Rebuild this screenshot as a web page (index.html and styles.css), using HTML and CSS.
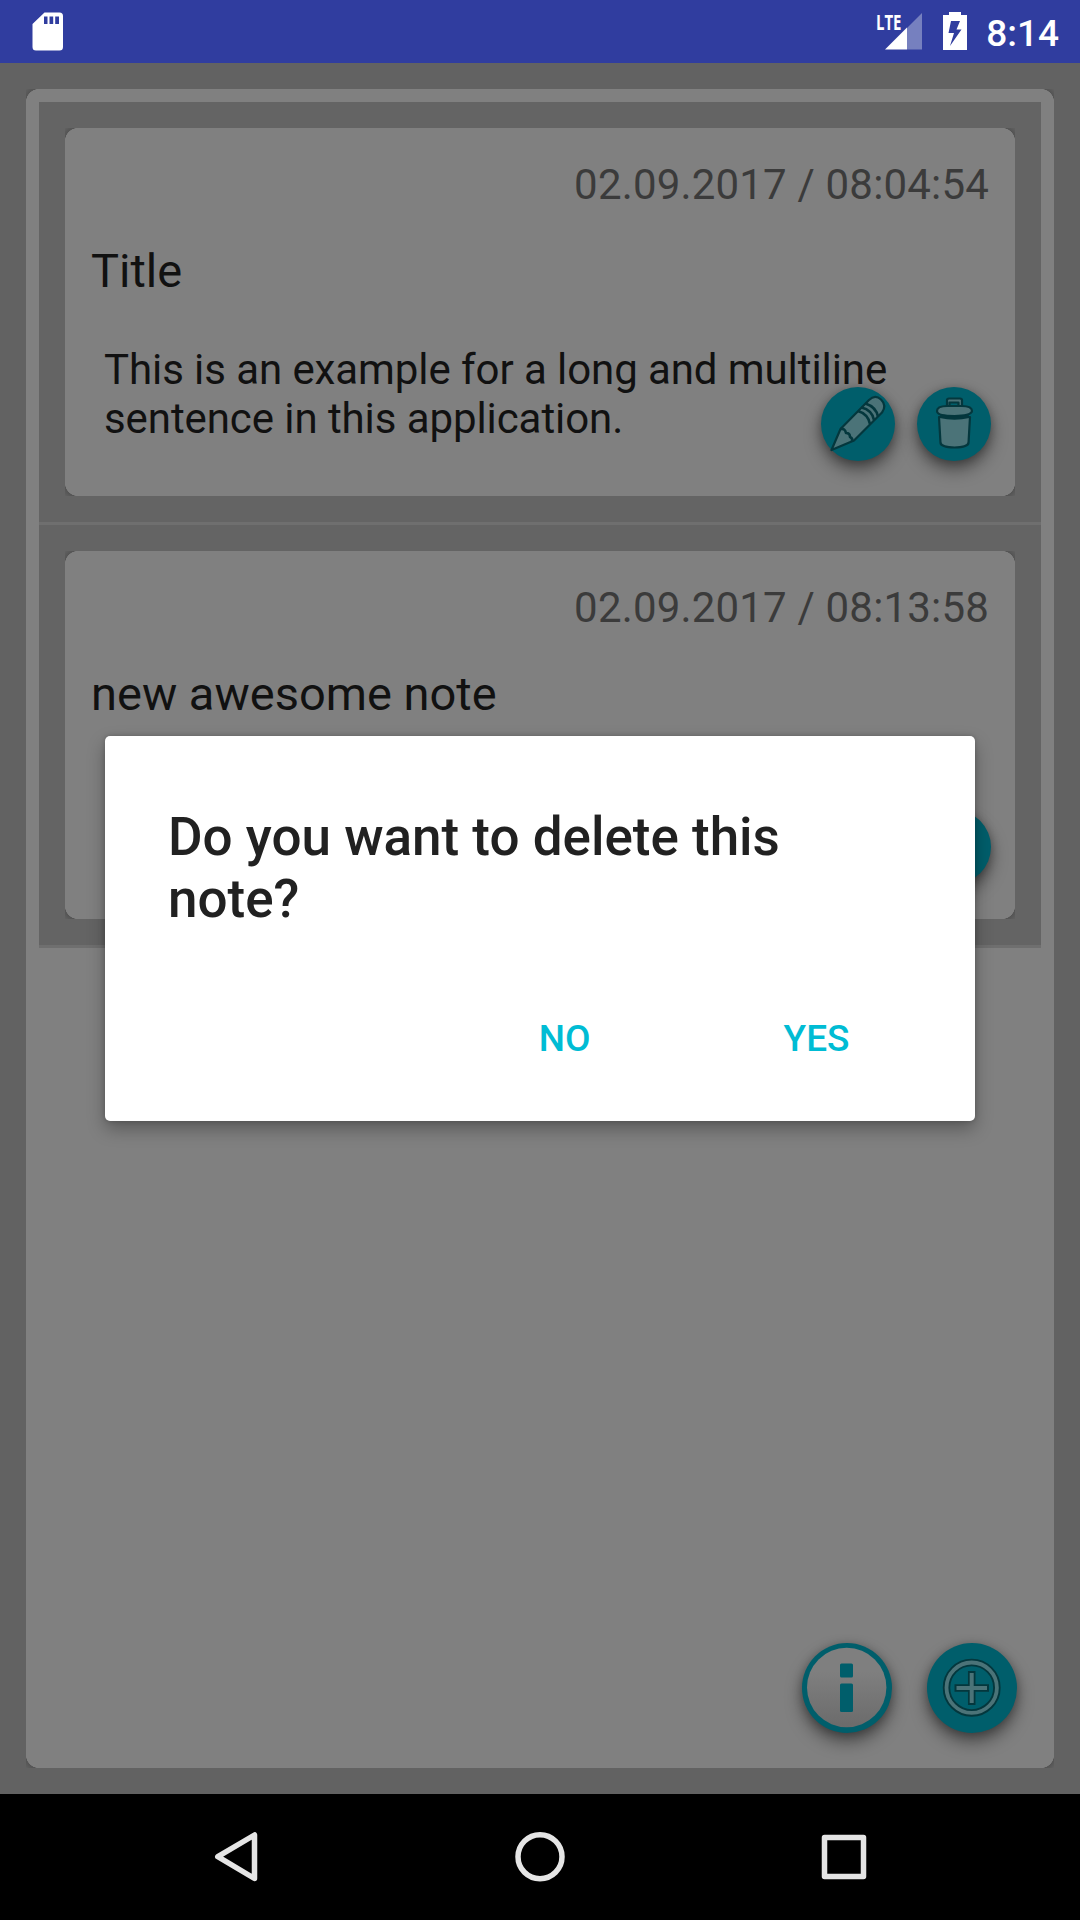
FILE: index.html
```html
<!DOCTYPE html>
<html lang="en">
<head>
<meta charset="utf-8">
<title>Notes</title>
<link rel="stylesheet" href="styles.css">
</head>
<body>
<div class="screen">
  <header class="status-bar">
    <svg class="sd-icon" width="32" height="40" viewBox="0 0 32 40"><path fill="#fff" fill-rule="evenodd" d="M12.500 .5H27.500Q31 .5 31 4V35Q31 38.500 27.500 38.500H4Q.5 38.500 .5 35V12ZM12 4.500V12H15.500V4.500ZM17.500 4.500V12H21.200V4.500ZM23.200 4.500V12H27V4.500Z"/></svg>
    <div class="status-right">
      <div class="signal">
        <svg width="38" height="38" viewBox="0 0 38 38"><path fill="#7680bf" d="M37 0V36.500H22V15Z"/><path fill="#fff" d="M22 14.500V36.500H0Z"/></svg>
        <span class="lte">LTE</span>
      </div>
      <svg class="battery" width="24" height="38" viewBox="0 0 24 38"><path fill="#fff" fill-rule="evenodd" d="M6 0H18V3H24V38H0V3H6ZM8 9L5.500 21H11L7 34L18.500 17.500H13.500L17 9Z"/></svg>
      <span class="clock">8:14</span>
    </div>
  </header>

  <main class="app">
    <section class="panel">
      <ul class="notes">
        <li class="row">
          <article class="card">
            <time class="date">02.09.2017 / 08:04:54</time>
            <h2 class="title">Title</h2>
            <p class="text">This is an example for a long and multiline sentence in this application.</p>
            <div class="actions">
              <button class="fab small" aria-label="Edit"><svg width="74" height="74" viewBox="0 0 74 74"><g fill="#4b7378" stroke="#04373d" stroke-width="2.200" stroke-linejoin="round"><path d="M10.500 63L19.500 42L48 13Q54 7 60 12.500Q66 18.500 61 25.500L33 53.500Z"/><path fill="none" stroke-width="2.600" d="M19.500 42Q24 41 25 46Q29 46 29 50Q32 51 31 54.500M37 24Q47 27 49 37M40.500 20.500Q51 23 53 33M44.500 16.500Q55 20 57 29.500"/></g></svg></button>
              <button class="fab small" aria-label="Delete"><svg width="74" height="74" viewBox="0 0 74 74"><g fill="#4b7378" stroke="#04373d" stroke-width="2.200" stroke-linejoin="round"><path d="M22 30H53L51.500 56Q51 60 37.500 60.500Q24 60 23.500 56Z"/><path d="M30 21V13Q30 11.500 32 11.500H43Q45 11.500 45 13V21Z"/><path fill="#005e6b" d="M32.500 15.500H41.500V20H32.500Z"/><path d="M20 24Q20 19 30 19H45Q55 19 55 24Q54 29 37.500 29Q20 29 20 24Z"/><path fill="none" stroke-width="3" d="M23 29.500Q37.500 33 52 29.500"/></g></svg></button>
            </div>
          </article>
        </li>
        <li class="row">
          <article class="card">
            <time class="date">02.09.2017 / 08:13:58</time>
            <h2 class="title">new awesome note</h2>
            <div class="actions">
              <button class="fab small" aria-label="Edit"></button>
              <button class="fab small" aria-label="Delete"></button>
            </div>
          </article>
        </li>
      </ul>
      <div class="tools">
        <button class="fab" aria-label="Info"><svg width="90" height="90" viewBox="0 0 90 90"><defs><linearGradient id="g" x2="0" y2="1"><stop offset=".3" stop-color="#7f7f7f"/><stop offset="1" stop-color="#6b6b6b"/></linearGradient></defs><circle cx="44.700" cy="44.500" r="39.700" fill="url(#g)"/><g fill="#005e6b"><rect x="38" y="20.500" width="13" height="14" rx="1.500"/><rect x="38" y="40.500" width="13" height="28.500" rx="1.500"/></g></svg></button>
        <button class="fab" aria-label="Add"><svg width="90" height="90" viewBox="0 0 90 90"><g fill="none" stroke="#04373d"><circle cx="44.700" cy="44.700" r="25.200" stroke-width="7.500"/><path d="M44.700 28V62M27.500 45H62" stroke-width="7.500"/></g><g fill="none" stroke="#4b7378"><circle cx="44.700" cy="44.700" r="25.200" stroke-width="3.800"/><path d="M44.700 30V60M29.500 45H60" stroke-width="4"/></g></svg></button>
      </div>
    </section>
  </main>

  <nav class="nav-bar">
    <svg width="1080" height="126" viewBox="0 0 1080 126"><g fill="none" stroke="#e5e5e5" stroke-width="5.500" stroke-linejoin="round"><path d="M254.500 41V84.500L217.800 62.700Z"/><circle cx="540" cy="62.700" r="22"/><rect x="824.500" y="43.500" width="39" height="39"/></g></svg>
  </nav>

  <div class="dialog" role="dialog">
    <h1 class="question">Do you want to delete this note?</h1>
    <div class="choices">
      <button class="choice">NO</button>
      <button class="choice">YES</button>
    </div>
  </div>
</div>
</body>
</html>
```
FILE: styles.css
```css
* { box-sizing: border-box; margin: 0; padding: 0; }
body { font-family: Roboto, sans-serif; background: #000; }
button { border: 0; background: none; font: inherit; }
svg { display: block; }

.screen { position: relative; display: flex; flex-direction: column; width: 1080px; height: 1920px; overflow: hidden; }

.status-bar { flex: none; display: flex; justify-content: space-between; height: 63px; padding: 12px 21px 0 32px; background: #303d9f; color: #fff; }
.status-right { display: flex; }
.signal { position: relative; margin: 1px 20px 0 0; }
.lte { position: absolute; left: -9px; top: -2px; font: 700 22px/20px "Open Sans", sans-serif; transform: scaleX(.68); transform-origin: 0 0; }
.battery { margin-right: 19px; }
.clock { font-weight: 500; font-size: 37px; line-height: 43px; }

.app { flex: 1; padding: 26px; background: #626262; }
.panel { display: flex; flex-direction: column; justify-content: space-between; height: 1679px; padding: 13px; }
.app, .panel, .card { min-height: 0; }

/* rounded face with a faint shadow left in the square corners */
.panel, .card {
  --stops: #808080 12.700px, #545454 13.300px, #626262 18.500px;
  background:
    radial-gradient(circle at 100% 100%, var(--stops)) 0 0 / 13px 13px no-repeat,
    radial-gradient(circle at 0 100%, var(--stops)) 100% 0 / 13px 13px no-repeat,
    radial-gradient(circle at 100% 0, var(--stops)) 0 100% / 13px 13px no-repeat,
    radial-gradient(circle at 0 0, var(--stops)) 100% 100% / 13px 13px no-repeat,
    #808080;
}

.notes { list-style: none; }
.row { height: 423px; padding: 26px; background: #646464; border-bottom: 3px solid #6f6f6f; }
.card { position: relative; height: 368px; padding: 26px; }
.date { display: block; padding-top: 1px; text-align: right; font-size: 42px; line-height: 59px; letter-spacing: .18px; color: #3b3b3b; }
.title { margin-top: 29px; font-size: 47px; line-height: 55px; font-weight: 400; color: #111; }
.text { margin: 47px 0 0 13px; font-size: 42px; line-height: 49px; letter-spacing: -.08px; color: #111; }
.actions { position: absolute; right: 24px; bottom: 35px; display: flex; gap: 22px; }

.fab { width: 90px; height: 90px; border-radius: 50%; background: #005e6b; box-shadow: 0 9px 17px rgba(0, 0, 0, .42), 0 2px 10px rgba(0, 0, 0, .25); }
.small { width: 74px; height: 74px; }
.tools { display: flex; justify-content: flex-end; gap: 35px; padding: 0 24px 22px 0; }

.nav-bar { flex: none; height: 126px; background: #000; }

.dialog { position: absolute; left: 105px; top: 736px; width: 870px; height: 385px; padding: 71px 63px 0; border-radius: 5px; background: #fff; box-shadow: 0 8px 18px rgba(0, 0, 0, .3), 0 0 5px rgba(0, 0, 0, .2); }
.question { font-size: 53px; line-height: 61.5px; font-weight: 500; color: #212121; }
.choices { display: flex; justify-content: flex-end; gap: 21px; margin: 45px -20px 0 0; }
.choice { width: 231px; height: 126px; font-size: 37px; font-weight: 500; color: #00bcd4; }
```
